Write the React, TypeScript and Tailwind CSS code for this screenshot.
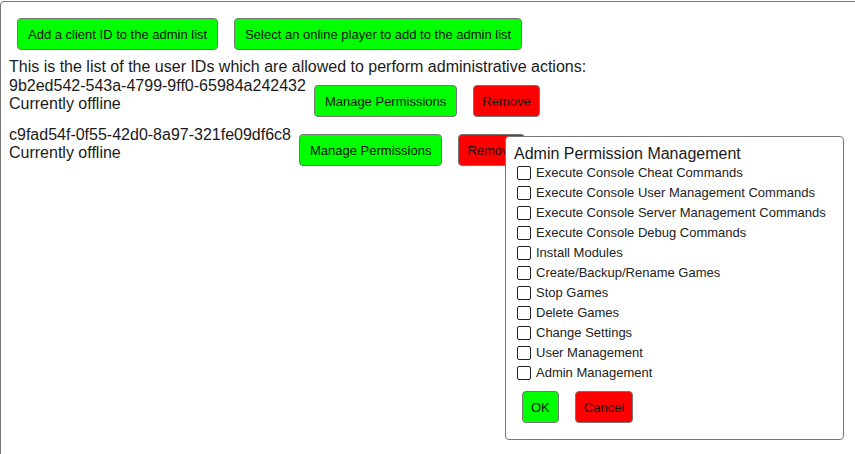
import React from "react";

const perms = [
  "Execute Console Cheat Commands",
  "Execute Console User Management Commands",
  "Execute Console Server Management Commands",
  "Execute Console Debug Commands",
  "Install Modules",
  "Create/Backup/Rename Games",
  "Stop Games",
  "Delete Games",
  "Change Settings",
  "User Management",
  "Admin Management",
];

const green =
  "m-2 h-8 px-[10px] shrink-0 bg-[#00ff00] border border-[#767676] rounded-[4px] text-[13px] text-[#111] leading-none whitespace-nowrap";
const greenSm =
  "m-2 h-8 px-2 shrink-0 bg-[#00ff00] border border-[#767676] rounded-[4px] text-[13px] text-[#111] leading-none whitespace-nowrap";
const red =
  "m-2 h-8 px-2 shrink-0 bg-[#ff0000] border border-[#767676] rounded-[4px] text-[13px] text-[#111] leading-none whitespace-nowrap";

const admins = [
  "9b2ed542-543a-4799-9ff0-65984a242432",
  "c9fad54f-0f55-42d0-8a97-321fe09df6c8",
];

export default function App() {
  return (
    <div className="w-[855px] h-[454px] overflow-hidden bg-white font-['Liberation_Sans',Arial,sans-serif] text-[#1a1a1a]">
      <div className="relative mt-px w-[900px] h-[480px] border border-[#767676] rounded-[4px] p-2 text-base leading-[18px]">
        <div className="flex">
          <button className={green}>Add a client ID to the admin list</button>
          <button className={green}>Select an online player to add to the admin list</button>
        </div>
        <div>This is the list of the user IDs which are allowed to perform administrative actions:</div>
        {admins.map((id) => (
          <div key={id} className="flex items-start pt-px">
            <div>
              <div>{id}</div>
              <div>Currently offline</div>
            </div>
            <button className={green}>Manage Permissions</button>
            <button className={red}>Remove</button>
          </div>
        ))}
        <div className="absolute left-[504px] top-[134px] w-[339px] bg-white border border-[#767676] rounded-[4px] p-2">
          <div className="text-base leading-[18px]">Admin Permission Management</div>
          {perms.map((p) => (
            <div key={p} className="flex items-center h-5">
              <span className="ml-[3px] w-[14px] h-[14px] border border-[#222] rounded-[2px] bg-white shrink-0" />
              <span className="ml-[5px] text-[13px] text-[#222]">{p}</span>
            </div>
          ))}
          <div className="flex">
            <button className={greenSm}>OK</button>
            <button className={red}>Cancel</button>
          </div>
        </div>
      </div>
    </div>
  );
}
